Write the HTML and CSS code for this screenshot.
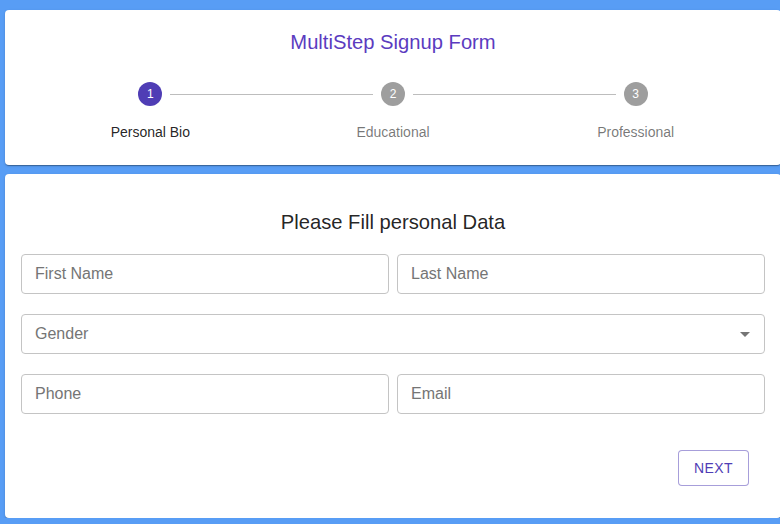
FILE: index.html
```html
<!DOCTYPE html>
<html>
<head>
<meta charset="utf-8">
<link rel="stylesheet" href="styles.css">
</head>
<body>
<div class="page">
  <section class="card header-card">
    <h1 class="title">MultiStep Signup Form</h1>
    <div class="stepper">
      <div class="step active">
        <span class="icon">1</span>
        <span class="label">Personal Bio</span>
      </div>
      <div class="step">
        <span class="connector"></span>
        <span class="icon">2</span>
        <span class="label">Educational</span>
      </div>
      <div class="step">
        <span class="connector"></span>
        <span class="icon">3</span>
        <span class="label">Professional</span>
      </div>
    </div>
  </section>
  <section class="card form-card">
    <h2 class="heading">Please Fill personal Data</h2>
    <div class="row">
      <div class="field">First Name</div>
      <div class="field">Last Name</div>
    </div>
    <div class="row">
      <div class="field select">Gender
        <svg class="arrow" width="10" height="5" viewBox="0 0 10 5"><path d="M0 0L10 0L5 5Z" fill="#757575"/></svg>
      </div>
    </div>
    <div class="row">
      <div class="field">Phone</div>
      <div class="field">Email</div>
    </div>
    <div class="actions">
      <button class="btn">Next</button>
    </div>
  </section>
</div>
</body>
</html>
```

FILE: styles.css
```css
html, body {
  margin: 0;
  padding: 0;
  background: #589df5;
  font-family: "Liberation Sans", Arial, sans-serif;
  overflow: hidden;
}
.page {
  padding: 10px 0 0 5px;
  width: 776px;
  display: flex;
  flex-direction: column;
  gap: 9px;
}
.card {
  background: #fff;
  border-radius: 4px;
  box-shadow: 0 2px 1px -1px rgba(0,0,0,.2), 0 1px 1px 0 rgba(0,0,0,.14), 0 1px 3px 0 rgba(0,0,0,.12);
}
.header-card {
  padding: 18px 24px 23px;
  height: 114px;
}
.title {
  margin: 0;
  font-weight: 400;
  font-size: 20.2px;
  line-height: 28px;
  color: #5b3bbf;
  text-align: center;
}
.stepper {
  margin-top: 26px;
  display: flex;
}
.step {
  flex: 1;
  position: relative;
  display: flex;
  flex-direction: column;
  align-items: center;
}
.connector {
  position: absolute;
  top: 12px;
  left: calc(-50% + 20px);
  right: calc(50% + 20px);
  border-top: 1px solid #bdbdbd;
}
.icon {
  width: 24px;
  height: 24px;
  border-radius: 50%;
  background: #9e9e9e;
  color: #fff;
  font-size: 12px;
  line-height: 24px;
  text-align: center;
}
.step.active .icon {
  background: #4f3db5;
}
.label {
  margin-top: 16px;
  font-size: 14px;
  line-height: 20px;
  color: rgba(0,0,0,0.54);
}
.step.active .label {
  color: rgba(0,0,0,0.87);
}
.form-card {
  padding: 16px 16px 32px;
  height: 296px;
}
.heading {
  margin: 18px 0;
  font-weight: 400;
  font-size: 20.2px;
  line-height: 28px;
  color: rgba(0,0,0,0.87);
  text-align: center;
}
.row {
  display: flex;
  gap: 8px;
  margin-bottom: 20px;
}
.field {
  flex: 1;
  position: relative;
  height: 38px;
  border: 1px solid #c4c4c4;
  border-radius: 4px;
  padding: 0 13px;
  font-size: 16px;
  line-height: 38px;
  color: #757575;
}
.arrow {
  position: absolute;
  right: 14px;
  top: 17px;
}
.actions {
  display: flex;
  justify-content: flex-end;
  padding-right: 16px;
  margin-top: 36px;
}
.btn {
  width: 71px;
  height: 36px;
  background: #fff;
  border: 1px solid rgba(79,61,181,0.5);
  border-radius: 4px;
  color: #4f3db5;
  font-family: "Liberation Sans", Arial, sans-serif;
  font-size: 14px;
  text-transform: uppercase;
  letter-spacing: 0.4px;
  padding: 0;
}
```
